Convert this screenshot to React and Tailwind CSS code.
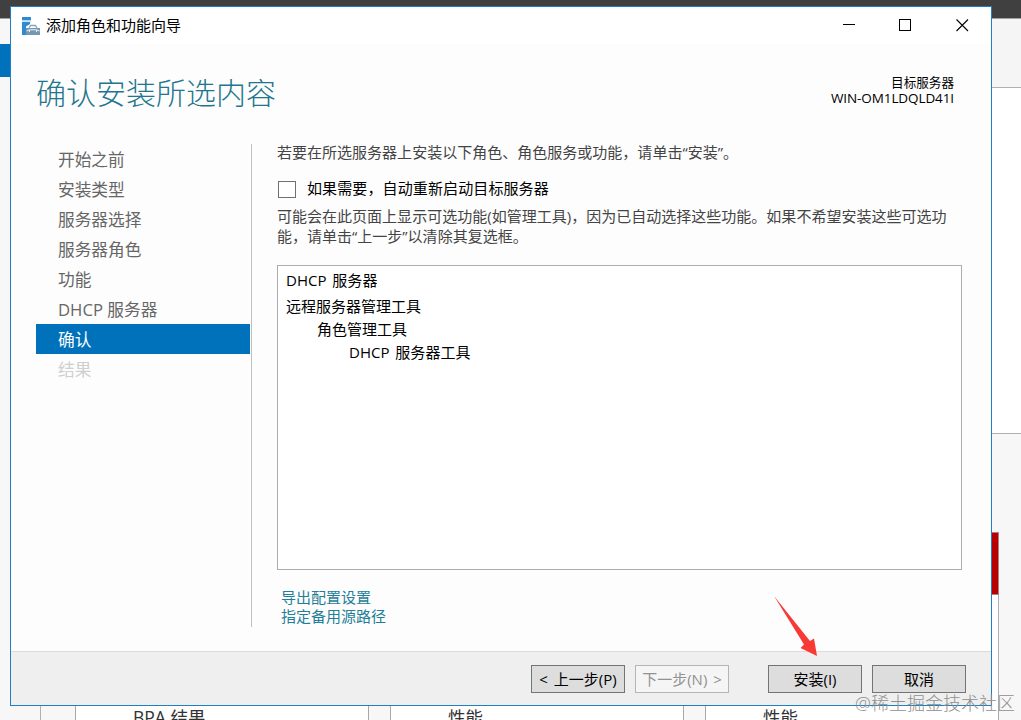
import clsx from 'clsx';

const steps = [
  { label: '开始之前', state: 'done' },
  { label: '安装类型', state: 'done' },
  { label: '服务器选择', state: 'done' },
  { label: '服务器角色', state: 'done' },
  { label: '功能', state: 'done' },
  { label: 'DHCP 服务器', state: 'done' },
  { label: '确认', state: 'current' },
  { label: '结果', state: 'disabled' },
];

const WizardIcon = () => (
  <svg width="18" height="18" viewBox="0 0 18 18" className="shrink-0">
    <path d="M0 0h9v3.5H0z" fill="#2f8ad4" />
    <path d="M0 5h8v2L4 9.500V18H0z" fill="#2f8ad4" />
    <path d="M0 3.5h9V5H0z" fill="#cfe3f4" />
    <path d="M4 11h14v7H4z" fill="#7698b0" />
    <path d="M7 11l1.500-2.500h5L15 11" fill="none" stroke="#8aa5b8" strokeWidth="1.3" />
    <path d="M4.500 14l3-1.200h7l3 1.200" fill="none" stroke="#e8eff4" strokeWidth="1" />
    <path d="M7.500 13v2m7-2v2" stroke="#e8eff4" strokeWidth="1" />
  </svg>
);

const TitleBar = () => (
  <div className="flex h-[37px] items-center bg-white pl-[11px] pr-[22px] text-black">
    <WizardIcon />
    <span className="mb-[2px] ml-[6px] grow text-[15px] leading-[20px]">添加角色和功能向导</span>
    <div className="flex gap-[44px]">
      <svg width="13" height="13" viewBox="0 0 13 13" shapeRendering="crispEdges">
        <path d="M1 5.5h12" stroke="#000" />
      </svg>
      <svg width="13" height="13" viewBox="0 0 13 13" shapeRendering="crispEdges">
        <path d="M.5 .5h11v11h-11z" fill="none" stroke="#000" />
      </svg>
      <svg width="13" height="13" viewBox="0 0 13 13">
        <path d="M.5 .5l11.500 11.500m0-11.500l-11.500 11.500" stroke="#000" strokeWidth="1.1" />
      </svg>
    </div>
  </div>
);

const Step = ({ label, state }) => (
  <li
    className={clsx(
      'h-[30px] pt-px pl-[22px] text-[16.7px] leading-[30px] whitespace-nowrap',
      state === 'current' && 'bg-[#0072bc] text-white',
      state === 'done' && 'text-[#666666]',
      state === 'disabled' && 'text-[#cfcfcf]'
    )}
  >
    {label}
  </li>
);

const WizardButton = ({ children, disabled, className }) => (
  <button
    disabled={disabled}
    className={clsx(
      'h-[28px] w-[94px] border text-center text-[15px] leading-[26px] whitespace-nowrap [word-spacing:2px]',
      disabled ? 'border-[#b5b5b5] bg-[#f5f5f5] text-[#929292]' : 'border-[#747474] bg-[#dddddd] text-black',
      className
    )}
  >
    {children}
  </button>
);

// Server Manager dashboard that stays visible around the wizard
const Dashboard = () => (
  <div className="flex h-full flex-col bg-[#f7f7f7]">
    <div className="h-[19px] border-b border-[#a0a0a0] bg-[#404040]" />
    <div className="flex grow justify-between">
      <div className="w-[10px] pt-[25px]">
        <div className="h-[33px] bg-[#0072bc]" />
      </div>
      <div className="flex w-[29px] flex-col">
        <div className="h-[68px] bg-[#f5f5f5]" />
        <div className="h-[347px] border-y border-[#b0b0b0] bg-white" />
        <div className="mt-[98px] h-[63px] w-[7px] border-y border-r border-[#b08080] bg-[#b80000]" />
        <div className="w-[7px] grow border-r border-[#b0b0b0] bg-white" />
      </div>
    </div>
    <div className="flex h-[14px] shrink-0 overflow-hidden text-[17.5px] leading-[22px] text-[#333333]">
      <div className="mr-[34px] w-[41px] border-r border-[#b0b0b0]" />
      <div className="mr-[21px] w-[294px] shrink-0 border-x border-[#a8a8a8] bg-white pl-[57px]">BPA 结果</div>
      <div className="mr-[21px] w-[294px] shrink-0 border-x border-[#a8a8a8] bg-white pl-[57px]">性能</div>
      <div className="w-[294px] shrink-0 border-x border-[#a8a8a8] bg-white pl-[57px]">性能</div>
    </div>
  </div>
);

const Wizard = () => (
  <div className="flex h-full flex-col border border-[#1f7fc0] bg-[#fdfdfd]">
    <TitleBar />

    <div className="flex h-[100px] justify-between pl-[25px] pr-[37px] whitespace-nowrap">
      <h1 className="pt-[28px] text-[30px] leading-[42px] font-light text-[#1f768e]">确认安装所选内容</h1>
      <div className="pt-[31px] text-right text-black">
        <div className="text-[12.6px] leading-[16px]">目标服务器</div>
        <div className="text-[13.5px] leading-[15px] tracking-[-0.1px]">WIN-OM1LDQLD41I</div>
      </div>
    </div>

    <div className="flex grow pl-[25px]">
      <div className="h-[483px] w-[216px] border-r border-[#c0c0c0]">
        <ul className="w-[214px]">
          {steps.map((step) => (
            <Step key={step.label} {...step} />
          ))}
        </ul>
      </div>

      <div className="ml-[25px] w-[685px] text-[15.03px] whitespace-nowrap text-[#444444]">
        <p className="-mt-px leading-[18px]">若要在所选服务器上安装以下角色、角色服务或功能，请单击“安装”。</p>
        <label className="mt-[16px] flex items-center text-black">
          <span className="mt-[4px] ml-[1px] h-[17px] w-[18px] border border-[#707070] bg-white" />
          <span className="ml-[11px] leading-[20px] tracking-[0.1px]">如果需要，自动重新启动目标服务器</span>
        </label>
        <p className="mt-[9px] leading-[19.5px]">
          可能会在此页面上显示可选功能(如管理工具)，因为已自动选择这些功能。如果不希望安装这些可选功
          <br />
          能，请单击“上一步”以清除其复选框。
        </p>

        <div className="mt-[19px] h-[305px] border border-[#adadad] bg-white pl-[8px] pt-[2px] text-black">
          <div className="leading-[24px] [word-spacing:2px]">DHCP 服务器</div>
          <div className="mt-[2px] leading-[24px]">远程服务器管理工具</div>
          <div className="pl-[31px] leading-[22px]">角色管理工具</div>
          <div className="pl-[63px] leading-[24px] [word-spacing:2px]">DHCP 服务器工具</div>
        </div>

        <div className="mt-[18px] pl-[4px] leading-[19px] text-[#1f7f98]">
          <div>导出配置设置</div>
          <div>指定备用源路径</div>
        </div>
      </div>
    </div>

    <div className="flex h-[54px] shrink-0 justify-end border-t border-[#dcdcdc] bg-[#efefef] pt-[13px] pr-[25px]">
      <WizardButton>&lt; 上一步(P)</WizardButton>
      <WizardButton disabled className="ml-[10px]">下一步(N) &gt;</WizardButton>
      <WizardButton className="ml-[39px]">安装(I)</WizardButton>
      <WizardButton className="ml-[10px]">取消</WizardButton>
    </div>
  </div>
);

export default function App() {
  return (
    <div className="relative h-[720px] w-[1021px] overflow-hidden font-['Open_Sans','Noto_Sans_CJK_SC',sans-serif]">
      <Dashboard />
      <div className="absolute top-[6px] left-[10px] h-[700px] w-[982px]">
        <Wizard />
      </div>

      {/* arrow pointing at the install button */}
      <svg className="absolute top-[590px] left-[768px]" width="60" height="72" viewBox="0 0 60 72">
        <path d="M6 6L42 51L46 48.500L49 66L32.500 58L36 54.500Z" fill="#f83a36" />
      </svg>

      <div className="absolute top-[690px] left-[855px] text-[18px] leading-[26px] font-light whitespace-nowrap text-[#8f8f8f]">
        @稀土掘金技术社区
      </div>
    </div>
  );
}
